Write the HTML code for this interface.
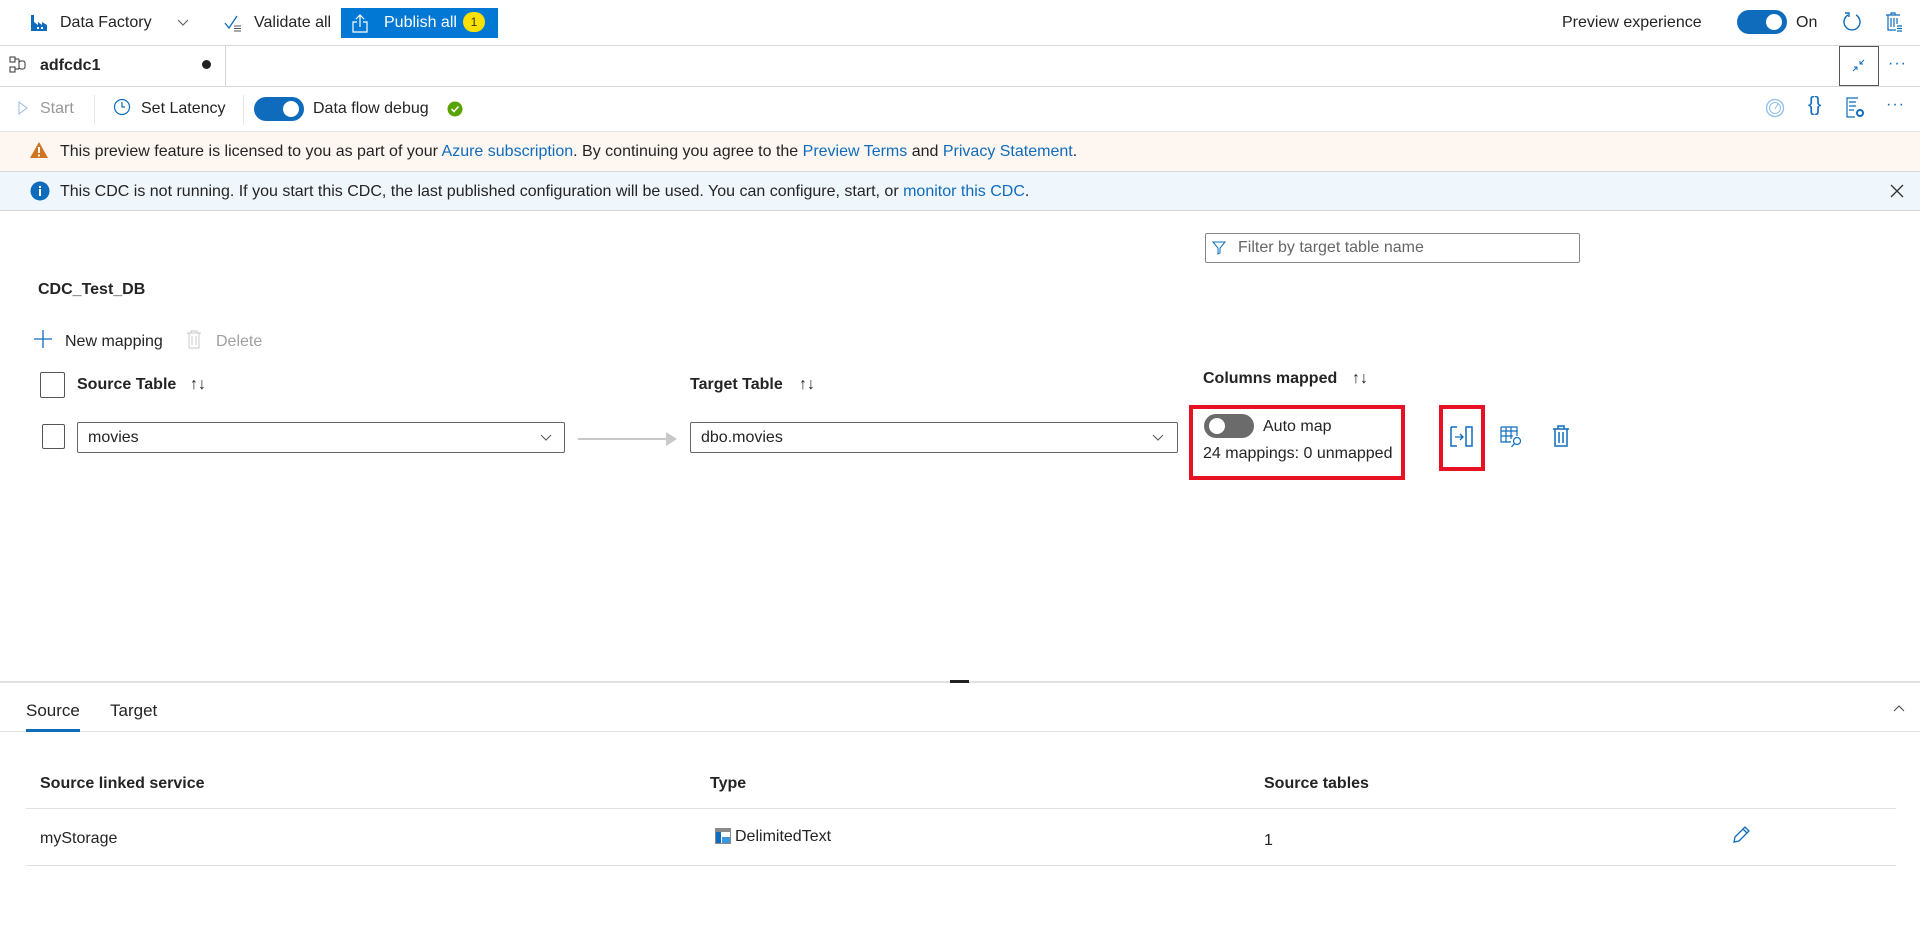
<!DOCTYPE html>
<html><head><meta charset="utf-8"><style>
*{box-sizing:border-box;margin:0;padding:0}
body{width:1920px;height:931px;position:relative;overflow:hidden;background:#fff;font-family:"Liberation Sans",sans-serif;font-size:16px;color:#242424}
.a{position:absolute;white-space:nowrap}
.hl{position:absolute;left:0;width:1920px;height:1px;background:#d6d6d6}
.blue{color:#0f6cbd}
.b{font-weight:bold}
svg{position:absolute}
</style></head><body>
<svg style="left:30px;top:14px" width="18" height="18" viewBox="0 0 18 18"><rect x="1" y="1" width="3" height="16" fill="#0f6cbd"/><path d="M4 17V8l4 3V8l4 3V8l5 3v6z" fill="#0f6cbd"/><rect x="7" y="13" width="2" height="2" fill="#fff"/><rect x="11" y="13" width="2" height="2" fill="#fff"/></svg>
<div class="a" style="left:60px;top:14px">Data Factory</div>
<svg style="left:177px;top:19px" width="12" height="8"><path d="M1 1l5 5 5-5" stroke="#555" fill="none"/></svg>
<svg style="left:224px;top:14px" width="18" height="18"><path d="M1 9l4 5 8-12" stroke="#0f6cbd" fill="none" stroke-width="1.3"/><path d="M10 12h7M10 14.5h7M10 17h7" stroke="#555" stroke-width="1"/></svg>
<div class="a" style="left:254px;top:14px">Validate all</div>
<div class="a" style="left:341px;top:8px;width:157px;height:30px;background:#0078d4"></div>
<svg style="left:351px;top:13px" width="18" height="20"><path d="M9 14V2M5 6l4-4 4 4M6 9H2v10h14V9h-4" stroke="#fff" fill="none" stroke-width="1.2"/></svg>
<div class="a" style="left:384px;top:14px;color:#fff">Publish all</div>
<div class="a" style="left:463px;top:12px;width:22px;height:20px;border-radius:10px;background:#fce100;color:#333;font-size:12px;text-align:center;line-height:20px">1</div>
<div class="a" style="left:1562px;top:14px">Preview experience</div>
<div class="a" style="left:1737px;top:10px;width:50px;height:24px;border-radius:12px;background:#0f6cbd"></div>
<div class="a" style="left:1766px;top:14px;width:16px;height:16px;border-radius:8px;background:#fff"></div>
<div class="a" style="left:1796px;top:14px">On</div>
<svg style="left:1842px;top:11px" width="20" height="22"><path d="M6 4A8 8 0 1 0 14 4" stroke="#0f6cbd" fill="none" stroke-width="1.4"/><path d="M3 2h4v4" stroke="#0f6cbd" fill="none" stroke-width="1.4"/></svg>
<svg style="left:1885px;top:11px" width="18" height="22"><path d="M1 4h14M6 4V2h4v2M3 4v15h8M6 7v9M9 7v9M12 7v6M12 15h5M12 17.5h5M12 20h5" stroke="#0f6cbd" fill="none" stroke-width="1.2"/></svg>
<div class="hl" style="top:45px"></div>
<svg style="left:9px;top:56px" width="18" height="18"><rect x="1" y="1" width="5" height="5" stroke="#333" fill="none"/><rect x="1" y="11" width="5" height="5" stroke="#333" fill="none"/><path d="M6 3h4M6 13h4M10 3v10" stroke="#333" fill="none"/><rect x="10" y="5" width="6" height="8" rx="2" stroke="#333" fill="none"/></svg>
<div class="a b" style="left:40px;top:57px">adfcdc1</div>
<div class="a" style="left:202px;top:60px;width:9px;height:9px;border-radius:5px;background:#222"></div>
<div class="a" style="left:225px;top:45px;width:1px;height:41px;background:#d6d6d6"></div>
<div class="a" style="left:1839px;top:46px;width:40px;height:40px;border:1px solid #555"></div>
<svg style="left:1851px;top:58px" width="16" height="16"><path d="M2 13l4-4M3 9h3v3M13 2l-4 4M9 3v3h3" stroke="#0f6cbd" fill="none"/></svg>
<div class="a" style="left:1888px;top:55px;color:#0f6cbd;font-size:16px;letter-spacing:1px">···</div>
<div class="hl" style="top:86px"></div>
<svg style="left:17px;top:100px" width="12" height="16"><path d="M2 2l8 6-8 6z" stroke="#a0b8d8" fill="none"/></svg>
<div class="a" style="left:40px;top:100px;color:#999">Start</div>
<div class="a" style="left:94px;top:95px;width:1px;height:30px;background:#e5e5e5"></div>
<svg style="left:113px;top:98px" width="18" height="18"><circle cx="9" cy="9" r="7.5" stroke="#0f6cbd" fill="none" stroke-width="1.2"/><path d="M9 4v5h3" stroke="#0f6cbd" fill="none" stroke-width="1.2"/></svg>
<div class="a" style="left:141px;top:100px">Set Latency</div>
<div class="a" style="left:243px;top:95px;width:1px;height:30px;background:#e5e5e5"></div>
<div class="a" style="left:254px;top:97px;width:50px;height:24px;border-radius:12px;background:#0f6cbd"></div>
<div class="a" style="left:283px;top:101px;width:16px;height:16px;border-radius:8px;background:#fff"></div>
<div class="a" style="left:313px;top:100px">Data flow debug</div>
<svg style="left:447px;top:101px" width="16" height="16"><circle cx="8" cy="8" r="7.5" fill="#57a300"/><path d="M4.5 8l2.5 2.5 4.5-5" stroke="#fff" fill="none" stroke-width="1.6"/></svg>
<svg style="left:1765px;top:97px" width="20" height="22"><circle cx="10" cy="11" r="8.5" stroke="#8fbde8" fill="none" stroke-width="1.3"/><circle cx="10" cy="11" r="5.5" stroke="#8fbde8" fill="none"/><path d="M10 12l3-5" stroke="#8fbde8"/></svg>
<div class="a" style="left:1808px;top:94px;color:#0f6cbd;font-size:20px">{}</div>
<svg style="left:1845px;top:97px" width="20" height="22"><path d="M13 1H2v19h8M4 5h7M4 9h7M4 13h5" stroke="#0f6cbd" fill="none" stroke-width="1.2"/><circle cx="15" cy="16" r="3" stroke="#0f6cbd" fill="none" stroke-width="2"/></svg>
<div class="a" style="left:1886px;top:96px;color:#0f6cbd;font-size:16px;letter-spacing:1px">···</div>
<div class="a" style="left:0;top:131px;width:1920px;height:40px;background:#fdf6f1;border-top:1px solid #e3e3e3"></div>
<svg style="left:29px;top:141px" width="20" height="18"><path d="M10 1L19 17H1z" fill="#d07420"/><rect x="9" y="6" width="2" height="6" fill="#fff"/><rect x="9" y="13.5" width="2" height="2" fill="#fff"/></svg>
<div class="a" style="left:60px;top:143px">This preview feature is licensed to you as part of your <span class="blue">Azure subscription</span>. By continuing you agree to the <span class="blue">Preview Terms</span> and <span class="blue">Privacy Statement</span>.</div>
<div class="a" style="left:0;top:171px;width:1920px;height:40px;background:#eff6fc;border-top:1px solid #d6d6d6;border-bottom:1px solid #d6d6d6"></div>
<svg style="left:30px;top:181px" width="20" height="20"><circle cx="10" cy="10" r="9.5" fill="#0f6cbd"/><rect x="9" y="8" width="2" height="7" fill="#fff"/><rect x="9" y="5" width="2" height="2" fill="#fff"/></svg>
<div class="a" style="left:60px;top:183px">This CDC is not running. If you start this CDC, the last published configuration will be used. You can configure, start, or <span class="blue">monitor this CDC</span>.</div>
<svg style="left:1890px;top:184px" width="14" height="14"><path d="M1 1l12 12M13 1L1 13" stroke="#333" stroke-width="1.3"/></svg>
<div class="a" style="left:1205px;top:233px;width:375px;height:30px;border:1px solid #888;border-radius:2px"></div>
<svg style="left:1212px;top:241px" width="14" height="14"><path d="M1 1h12L8 7v5l-2 1V7z" stroke="#0f6cbd" fill="none"/></svg>
<div class="a" style="left:1238px;top:239px;color:#666">Filter by target table name</div>
<div class="a b" style="left:38px;top:281px">CDC_Test_DB</div>
<svg style="left:34px;top:330px" width="18" height="18"><path d="M9 0v18M0 9h18" stroke="#0f6cbd" stroke-width="1.3"/></svg>
<div class="a" style="left:65px;top:333px">New mapping</div>
<svg style="left:186px;top:329px" width="16" height="20"><path d="M1 4h14M5 4V2h6v2M3 4v15h10V4M6 7v9M10 7v9" stroke="#c8c8c8" fill="none"/></svg>
<div class="a" style="left:216px;top:333px;color:#a0a0a0">Delete</div>
<div class="a" style="left:40px;top:372px;width:25px;height:26px;border:1px solid #555;border-radius:2px"></div>
<div class="a b" style="left:77px;top:376px">Source Table</div>
<div class="a" style="left:190px;top:376px">↑↓</div>
<div class="a b" style="left:690px;top:376px">Target Table</div>
<div class="a" style="left:799px;top:376px">↑↓</div>
<div class="a b" style="left:1203px;top:370px">Columns mapped</div>
<div class="a" style="left:1352px;top:370px">↑↓</div>
<div class="a" style="left:42px;top:424px;width:23px;height:25px;border:1px solid #555;border-radius:2px"></div>
<div class="a" style="left:77px;top:422px;width:488px;height:31px;border:1px solid #666;border-radius:2px"></div>
<div class="a" style="left:88px;top:429px">movies</div>
<svg style="left:540px;top:434px" width="12" height="8"><path d="M1 1l5 5 5-5" stroke="#555" fill="none"/></svg>
<div class="a" style="left:578px;top:438px;width:90px;height:2px;background:#c8c8c8"></div>
<svg style="left:666px;top:432px" width="12" height="14"><path d="M0 0l11 7-11 7z" fill="#c8c8c8"/></svg>
<div class="a" style="left:690px;top:422px;width:488px;height:31px;border:1px solid #666;border-radius:2px"></div>
<div class="a" style="left:701px;top:429px">dbo.movies</div>
<svg style="left:1152px;top:434px" width="12" height="8"><path d="M1 1l5 5 5-5" stroke="#555" fill="none"/></svg>
<div class="a" style="left:1189px;top:405px;width:216px;height:75px;border:4px solid #e81123"></div>
<div class="a" style="left:1204px;top:414px;width:50px;height:24px;border-radius:12px;background:#6b6b6b"></div>
<div class="a" style="left:1209px;top:418px;width:16px;height:16px;border-radius:8px;background:#fff"></div>
<div class="a" style="left:1263px;top:418px">Auto map</div>
<div class="a" style="left:1203px;top:445px">24 mappings: 0 unmapped</div>
<div class="a" style="left:1439px;top:405px;width:46px;height:66px;border:4px solid #e81123"></div>
<svg style="left:1450px;top:426px" width="24" height="22"><path d="M1 1h6M1 1v19h6" stroke="#0f6cbd" fill="none" stroke-width="1.5"/><path d="M5 11h8M10 8l3 3-3 3" stroke="#0f6cbd" fill="none" stroke-width="1.3"/><rect x="16" y="1" width="6" height="19" stroke="#0f6cbd" fill="none" stroke-width="1.5"/></svg>
<svg style="left:1500px;top:426px" width="24" height="22"><path d="M1 1h16v9M1 1v15h10M1 5h16M1 10h12M6 1v15M11 1v12" stroke="#0f6cbd" fill="none" stroke-width="1.2"/><circle cx="17" cy="15" r="3.5" stroke="#0f6cbd" fill="none" stroke-width="1.2"/><path d="M14.5 17.5l-3 3.5" stroke="#0f6cbd" stroke-width="1.3"/></svg>
<svg style="left:1552px;top:425px" width="18" height="22"><path d="M1 4h16M6 4V1h6v3M3 4v17h12V4M7 7v11M11 7v11" stroke="#0f6cbd" fill="none" stroke-width="1.5"/></svg>
<div class="a" style="left:0;top:681px;width:1920px;height:2px;background:#e1e1e1"></div>
<div class="a" style="left:950px;top:680px;width:19px;height:3px;background:#222"></div>
<div class="a" style="left:26px;top:701px;font-size:17px">Source</div>
<div class="a" style="left:110px;top:701px;font-size:17px">Target</div>
<div class="a" style="left:0;top:731px;width:1920px;height:1px;background:#e1e1e1"></div>
<div class="a" style="left:26px;top:729px;width:54px;height:3px;background:#0f6cbd"></div>
<svg style="left:1893px;top:704px" width="12" height="8"><path d="M1 7l5-5 5 5" stroke="#444" fill="none"/></svg>
<div class="a b" style="left:40px;top:775px">Source linked service</div>
<div class="a b" style="left:710px;top:775px">Type</div>
<div class="a b" style="left:1264px;top:775px">Source tables</div>
<div class="a" style="left:26px;top:808px;width:1870px;height:1px;background:#e1e1e1"></div>
<div class="a" style="left:40px;top:830px">myStorage</div>
<svg style="left:715px;top:828px" width="16" height="16"><rect x="0" y="0" width="16" height="16" fill="#8a8a8a"/><rect x="1" y="4" width="14" height="11" fill="#fff"/><rect x="1" y="4" width="5" height="11" fill="#0f6cbd"/><rect x="7" y="9" width="8" height="6" fill="#3a96dd"/></svg>
<div class="a" style="left:735px;top:828px">DelimitedText</div>
<div class="a" style="left:1264px;top:832px">1</div>
<svg style="left:1731px;top:825px" width="20" height="20"><path d="M3 17l1-5L14 2l4 4L8 16z M12 4l4 4" stroke="#0f6cbd" fill="none" stroke-width="1.3"/></svg>
<div class="a" style="left:26px;top:865px;width:1870px;height:1px;background:#e1e1e1"></div>
</body></html>
